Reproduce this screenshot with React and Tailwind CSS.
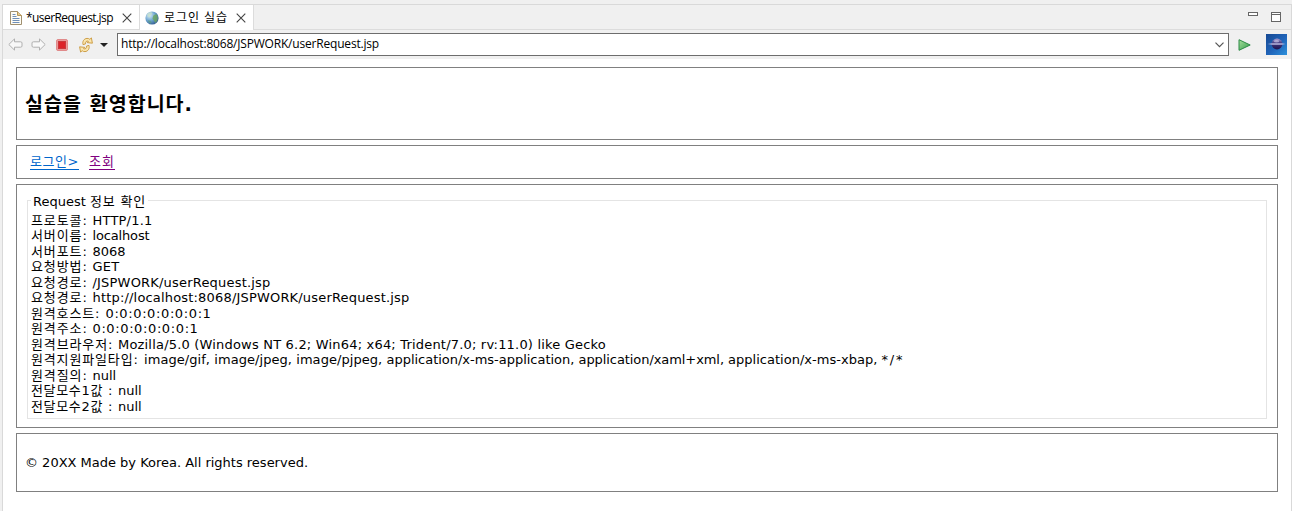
import { useLayoutEffect, useRef } from "react";

// Text tracked so that it fills a given advance width.
function Fit({ w, className = "", children }) {
  const ref = useRef(null);
  useLayoutEffect(() => {
    const el = ref.current;
    el.style.letterSpacing = "0px";
    const natural = el.getBoundingClientRect().width;
    el.style.letterSpacing = (w - natural) / el.textContent.length + "px";
  }, [w, children]);
  return (
    <span ref={ref} className={`inline-block shrink-0 whitespace-pre ${className}`}>
      {children}
    </span>
  );
}

const rows = [
  ["프로토콜", 51.5, ": ", 10, "HTTP/1.1", 60],
  ["서버이름", 51.5, ": ", 10, "localhost", 57],
  ["서버포트", 51.5, ": ", 10, "8068", 33],
  ["요청방법", 51.5, ": ", 10, "GET", 27],
  ["요청경로", 51.5, ": ", 10, "/JSPWORK/userRequest.jsp", 178],
  ["요청경로", 51.5, ": ", 10, "http://localhost:8068/JSPWORK/userRequest.jsp", 317],
  ["원격호스트", 64, ": ", 10.5, "0:0:0:0:0:0:0:1", 106],
  ["원격주소", 51.5, ": ", 10, "0:0:0:0:0:0:0:1", 106],
  ["원격브라우저", 77, ": ", 10, "Mozilla/5.0 (Windows NT 6.2; Win64; x64; Trident/7.0; rv:11.0) like Gecko", 488],
  ["원격지원파일타입", 102.5, ": ", 10.5, "image/gif, image/jpeg, image/pjpeg, ", 242.5, "application/x-ms-application, ", 192, "application/xaml+xml, ", 149.5, "application/x-ms-xbap, ", 153.5, "*/*", 23],
  ["원격질의", 51.5, ": ", 10, "null", 23.5],
  ["전달모수1값", 72, " : ", 15, "null", 23.5],
  ["전달모수2값", 72, " : ", 15, "null", 23.5],
];

const CloseIcon = () => (
  <svg width="10" height="10" viewBox="0 0 10 10" fill="none" stroke="#444" strokeWidth="1.1">
    <path d="M.7.7l8.6 8.6M9.3.7L.7 9.3" />
  </svg>
);

const FileIcon = () => (
  <svg width="12" height="14" viewBox="0 0 12 14">
    <path d="M.5.5h7l4 4v9H.5z" fill="#fffdf5" stroke="#a09070" />
    <path d="M7.5.5v4h4" fill="#e5cc94" stroke="#b89654" />
    <path d="M2.5 3.5h3M2.5 5.5h4M2.5 7.5h7M2.5 9.5h7M2.5 11.5h7" stroke="#6f8fb8" />
  </svg>
);

const GlobeIcon = () => (
  <svg width="14" height="14" viewBox="0 0 14 14">
    <defs>
      <radialGradient id="globe" cx=".32" cy=".3" r=".8">
        <stop offset="0" stopColor="#d6ebf7" />
        <stop offset=".5" stopColor="#6fa6d0" />
        <stop offset="1" stopColor="#2b568c" />
      </radialGradient>
    </defs>
    <circle cx="7" cy="7" r="6.6" fill="url(#globe)" />
    <path d="M2 3.2C3.5 1.5 5 1 6.7 1.2L7.5 3 5.4 4.5 4.8 6.4 2.8 6z" fill="#c4e0cc" opacity=".7" />
    <path d="M8.3 4.5l3-1.4c1.6 1.8 1.8 4.2 1 6.4L10.5 12 8.8 9.4 7.5 7.5z" fill="#6ba55c" opacity=".8" />
    <path d="M3 9.2l2.6.6 1 1.6-1 1C4.4 12 3.2 11 3 9.2z" fill="#5d9d80" opacity=".7" />
  </svg>
);

const ArrowIcon = ({ flip }) => (
  <svg width="15" height="13" viewBox="0 0 15 13" className={flip ? "-scale-x-100" : ""}>
    <path d="M.8 6.5L6.5.9v2.9h6q1.5 0 1.5 1.2v3q0 1.2-1.5 1.2h-6v2.9z" fill="#f8f8f8" stroke="#b0b0b0" strokeLinejoin="round" />
  </svg>
);

const RefreshIcon = () => (
  <svg width="16" height="16" viewBox="0 0 16 16" fill="#fbe6ae" stroke="#c8963a" strokeWidth=".9" strokeLinejoin="round">
    <path d="M5 7.6C4.2 4.3 6 1.6 9 1.4c1.2-.1 2.1.3 2.8.9L13.4.9l1 5.3-5.3-.6 1.3-1.3C8.6 3.4 6.9 5 7.4 7z" />
    <path d="M11 8.4c.8 3.3-1 6-4 6.2-1.2.1-2.1-.3-2.8-.9l-1.6 1.4-1-5.3 5.3.6-1.3 1.3c1.8.9 3.5-.7 3-2.7z" />
  </svg>
);

const EclipseIcon = () => (
  <svg width="21" height="21" viewBox="0 0 21 21">
    <defs>
      <linearGradient id="sky" x1="0" y1="0" x2="1" y2="1">
        <stop offset="0" stopColor="#174993" />
        <stop offset=".55" stopColor="#2065ba" />
        <stop offset="1" stopColor="#2c91dc" />
      </linearGradient>
      <linearGradient id="planet" x1="0" y1="0" x2="0" y2="1">
        <stop offset="0" stopColor="#aaa0d5" />
        <stop offset=".4" stopColor="#443a80" />
        <stop offset="1" stopColor="#20134f" />
      </linearGradient>
    </defs>
    <path d="M0 0h21v21H0z" fill="url(#sky)" />
    <circle cx="11" cy="10" r="5.4" fill="url(#planet)" />
    <path d="M1.5 10L6 9.3h10l3.5.7-3.5.8H6z" fill="#b5b4dc" />
    <ellipse cx="10.5" cy="7.2" rx="2.6" ry="1.2" fill="#d6d0ee" opacity=".6" />
  </svg>
);

export default function App() {
  return (
    <div className="flex h-[511px] w-[1292px] flex-col overflow-hidden bg-[#f0f0f0] pt-1 pl-[2px] font-['DejaVu_Sans','Noto_Sans_CJK_KR',sans-serif] text-[13px] text-black">
      <div className="flex min-h-0 flex-1 flex-col border border-b-0 border-[#d9d9d9]">
        <div className="flex h-[25px] shrink-0 font-['Open_Sans','Noto_Sans_CJK_KR',sans-serif] text-[12px]">
          <div className="flex w-[137px] items-center border-r border-b border-[#dcdcdc] bg-white pl-[7px]">
            <span className="pt-px"><FileIcon /></span>
            <Fit w={87} className="ml-1 pt-px">*userRequest.jsp</Fit>
            <span className="ml-[9px] pt-[2px]"><CloseIcon /></span>
          </div>
          <div className="flex w-[114px] items-center border-r border-[#dcdcdc] bg-white pl-[5px]">
            <span className="pt-px"><GlobeIcon /></span>
            <Fit w={64} className="ml-[5px]">로그인 실습</Fit>
            <span className="ml-[8px] pt-px"><CloseIcon /></span>
          </div>
          <div className="flex flex-1 items-start justify-end gap-[13px] border-b border-[#dcdcdc] pr-[10px]">
            <span className="mt-[7px] h-[4px] w-[10px] border border-[#666] bg-white" />
            <span className="mt-[7px] h-[10px] w-[10px] border border-[#666] bg-white">
              <span className="block h-[2px] border-b border-[#666]" />
            </span>
          </div>
        </div>
        <div className="flex h-[29px] shrink-0 items-center pl-[5px]">
          <ArrowIcon />
          <span className="ml-2"><ArrowIcon flip /></span>
          <span className="ml-[10px] flex h-[12px] w-[12px] items-center justify-center rounded-[2px] border border-[#e08a8a] bg-[#ea9a9a]">
            <span className="h-[8px] w-[8px] border border-[#c9383c] bg-[#dc2229]" />
          </span>
          <span className="ml-[10px]"><RefreshIcon /></span>
          <svg className="ml-[6px]" width="8" height="4" viewBox="0 0 8 4"><path d="M0 0h8L4 4z" fill="#222" /></svg>
          <div className="ml-[9px] flex h-[23px] w-[1112px] items-center justify-between border border-[#6d6d6d] bg-white pr-[4px] pl-[3px] font-['Open_Sans',sans-serif] text-[12px]">
            <Fit w={258} className="-mt-px">http://localhost:8068/JSPWORK/userRequest.jsp</Fit>
            <svg width="9" height="6" viewBox="0 0 9 6" fill="none" stroke="#555" strokeWidth="1.2"><path d="M.5.7l4 4 4-4" /></svg>
          </div>
          <svg className="ml-[9px]" width="13" height="12" viewBox="0 0 13 12">
            <defs>
              <linearGradient id="go" x1="0" y1="0" x2="1" y2="1">
                <stop offset="0" stopColor="#aadf9e" />
                <stop offset="1" stopColor="#2f9d49" />
              </linearGradient>
            </defs>
            <path d="M1 .7L12.2 6 1 11.3z" fill="url(#go)" stroke="#2c8a46" strokeLinejoin="round" />
          </svg>
          <span className="ml-[15px]"><EclipseIcon /></span>
        </div>
        <main className="flex min-h-0 flex-1 flex-col bg-white pt-[8px] pr-[13px] pl-[13px] leading-[15.5px]">
          <header className="flex h-[73px] w-[1262px] shrink-0 items-center border border-[#808080] pt-[2px] pl-[8px]">
            <h1 className="text-[19.5px] leading-[24px] font-bold"><Fit w={168}>실습을 환영합니다.</Fit></h1>
          </header>
          <nav className="mt-[5px] flex h-[34px] w-[1262px] shrink-0 items-center gap-[10px] border border-[#808080] pl-[13px]">
            <a className="border-b border-[#0066cc] text-[#0066cc]"><Fit w={49}>로그인&gt;</Fit></a>
            <a className="border-b border-[#800080] text-[#800080]"><Fit w={26}>조회</Fit></a>
          </nav>
          <section className="mt-[5px] h-[244px] w-[1262px] shrink-0 border border-[#808080] px-[10px] pt-[8px]">
            <fieldset className="h-[226px] border border-[#e4e4e4] px-[3px]">
              <legend className="flex h-[15px] px-[2px] pt-px"><Fit w={57}>{"Request "}</Fit><Fit w={56}>정보 확인</Fit></legend>
              <div className="pt-[4.75px]">
                {rows.map(([name, nw, sep, sw, ...values], i) => (
                  <div key={i} className="flex h-[15.5px]">
                    <Fit w={nw}>{name}</Fit>
                    <Fit w={sw}>{sep}</Fit>
                    {values.map((v, k) => (k % 2 === 0 ? <Fit key={k} w={values[k + 1]}>{v}</Fit> : null))}
                  </div>
                ))}
              </div>
            </fieldset>
          </section>
          <footer className="mt-[5px] flex h-[59px] w-[1262px] shrink-0 items-center border border-[#808080] pl-[8px]">
            <Fit w={283}>© 20XX Made by Korea. All rights reserved.</Fit>
          </footer>
        </main>
      </div>
    </div>
  );
}
